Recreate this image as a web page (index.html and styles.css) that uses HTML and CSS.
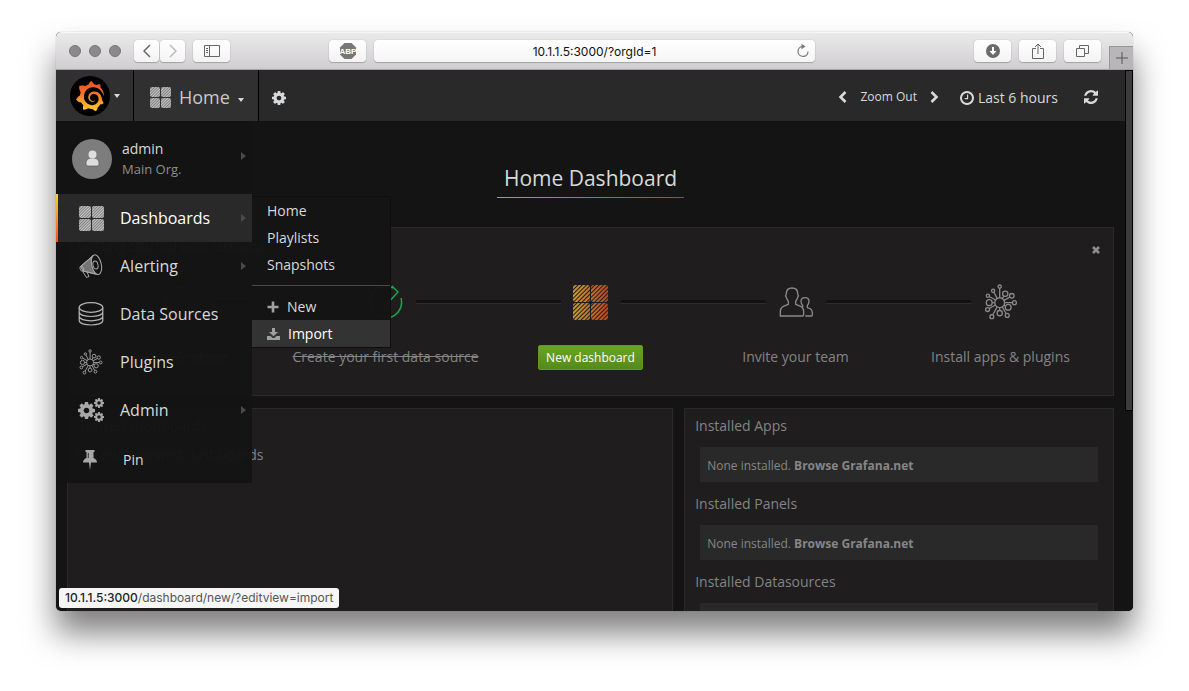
FILE: index.html
```html
<!DOCTYPE html>
<html lang="en">
<head>
<meta charset="utf-8">
<title>Grafana - Home</title>
<meta name="viewport" content="width=device-width, initial-scale=1">
<link rel="stylesheet" href="styles.css">
</head>
<body>
<svg class="sprite" aria-hidden="true">
  <defs>
    <linearGradient id="flame" x1="0" y1="1" x2="0" y2="0"><stop offset="0" stop-color="#fcd22c"/><stop offset=".15" stop-color="#fbb52d"/><stop offset=".65" stop-color="#f26a2a"/><stop offset="1" stop-color="#ef4e28"/></linearGradient>
    <linearGradient id="amber" gradientUnits="userSpaceOnUse" x1="0" y1="0" x2="36" y2="0"><stop offset="0" stop-color="#c59b2f"/><stop offset="1" stop-color="#bf4420"/></linearGradient>
    <pattern id="hatch" width="2" height="2" patternUnits="userSpaceOnUse" patternTransform="rotate(45)"><rect width="2" height="2" fill="#6a6a6a"/><rect width="1.200" height="2" fill="#c8c8c8"/></pattern>
    <pattern id="cuts" width="3" height="3" patternUnits="userSpaceOnUse" patternTransform="rotate(45)"><rect width="1" height="3" fill="#1f1d1e"/></pattern>
    <symbol id="tiles" viewBox="0 0 36 36"><rect width="17" height="17" rx="3"/><rect x="19" width="17" height="17" rx="3"/><rect y="19" width="17" height="17" rx="3"/><rect x="19" y="19" width="17" height="17" rx="3"/></symbol>
    <g id="tile-set"><rect width="17" height="17" rx="3"/><rect x="18" width="17" height="17" rx="3"/><rect y="18" width="17" height="17" rx="3"/><rect x="18" y="18" width="17" height="17" rx="3"/></g>
    <g id="tile-small"><rect width="10" height="10" rx="2"/><rect x="11" width="10" height="10" rx="2"/><rect y="11" width="10" height="10" rx="2"/><rect x="11" y="11" width="10" height="10" rx="2"/></g>
    <g id="tile-medium"><rect width="12" height="12" rx="2"/><rect x="13" width="12" height="12" rx="2"/><rect y="13" width="12" height="12" rx="2"/><rect x="13" y="13" width="12" height="12" rx="2"/></g>
    <symbol id="cog" viewBox="128 128 1536 1536"><path d="M1152 896q0-106-75-181t-181-75-181 75-75 181 75 181 181 75 181-75 75-181zm512-109v222q0 12-8 23t-20 13l-185 28q-19 54-39 91 35 50 107 138 10 12 10 25t-9 23q-27 37-99 108t-94 71q-12 0-26-9l-138-108q-44 23-91 38-16 136-29 186-7 28-36 28h-222q-14 0-24.500-8.500t-11.500-21.500l-28-184q-49-16-90-37l-141 107q-10 9-25 9-14 0-25-11-126-114-165-168-7-10-7-23 0-12 8-23 15-21 51-66.500t54-70.500q-27-50-41-99l-183-27q-13-2-21-12.500t-8-23.500v-222q0-12 8-23t19-13l186-28q14-46 39-92-40-57-107-138-10-12-10-24 0-10 9-23 26-36 98.500-107.500t94.500-71.500q13 0 26 10l138 107q44-23 91-38 16-136 29-186 7-28 36-28h222q14 0 24.500 8.500t11.500 21.500l28 184q49 16 90 37l142-107q9-9 24-9 13 0 25 10 129 119 165 170 7 8 7 22 0 12-8 23-15 21-51 66.500t-54 70.500q26 50 41 98l183 28q13 2 21 12.500t8 23.500z"/></symbol>
    <symbol id="hub" viewBox="368 190 102 110"><g fill="none" stroke="currentColor" stroke-width="4"><circle cx="415" cy="247" r="15"/><circle cx="415" cy="198" r="5"/><circle cx="395" cy="211" r="5"/><circle cx="432" cy="220" r="8"/><circle cx="379" cy="226" r="5"/><circle cx="452" cy="226" r="7"/><circle cx="383" cy="247" r="9"/><circle cx="460" cy="247" r="6"/><circle cx="378" cy="268" r="6"/><circle cx="441" cy="261" r="9"/><circle cx="391" cy="290" r="6"/><circle cx="415" cy="279" r="8"/><circle cx="438" cy="286" r="6"/><path d="M415 203v29M398 216l9 18M428 227l-5 7M384 229l19 10M446 230l-18 10M392 247h8M430 247h24M383 265l19-11M432 258l-4-3M394 284l13-24M415 262v9M435 281l-12-21"/></g></symbol>
  </defs>
</svg>

<div class="window">
  <header class="toolbar">
    <div class="lights"><span></span><span></span><span></span></div>
    <div class="history">
      <button class="key" aria-label="Back"><svg width="8" height="14" viewBox="0 0 8 14"><path d="M7 1 1 7l6 6" fill="none" stroke="#666" stroke-width="1.500"/></svg></button>
      <button class="key" aria-label="Forward"><svg width="8" height="14" viewBox="0 0 8 14"><path d="m1 1 6 6-6 6" fill="none" stroke="#bbb" stroke-width="1.500"/></svg></button>
    </div>
    <button class="key wide" aria-label="Show sidebar"><svg width="16" height="12" viewBox="0 0 16 12"><path d="M.5.5h15v11H.5zM5.500.5v11M2 3.500h2M2 5.500h2M2 7.500h2" fill="none" stroke="#666"/></svg></button>
    <button class="key wide adblock" aria-label="AdBlock"><svg width="18" height="18" viewBox="0 0 18 18"><path d="M5.500 1h7L17 5.500v7L12.500 17h-7L1 12.500v-7z" fill="#777"/><text x="9" y="12" text-anchor="middle" class="abp">ABP</text></svg></button>
    <div class="address">
      <input type="text" aria-label="Address" value="10.1.1.5:3000/?orgId=1">
      <button aria-label="Reload"><svg width="14" height="15" viewBox="0 0 14 15"><path d="M6.500 3.500A5 5 0 1 0 12 8.500" fill="none" stroke="#777" stroke-width="1.200"/><path d="m5.500.8 4 2.700-4 2.700z" fill="#777"/></svg></button>
    </div>
    <div class="actions">
      <button class="key wide" aria-label="Downloads"><svg width="14" height="14" viewBox="0 0 14 14"><circle cx="7" cy="7" r="7" fill="#6b6b6b"/><path d="M6 3h2v4h2.500L7 11 3.500 7H6z" fill="#fff"/></svg></button>
      <button class="key wide" aria-label="Share"><svg width="12" height="16" viewBox="0 0 12 16"><path d="M4 5.500H.5v10h11v-10H8M6 11V1M3 4l3-3 3 3" fill="none" stroke="#666"/></svg></button>
      <button class="key wide" aria-label="Show tabs"><svg width="13" height="12" viewBox="0 0 13 12"><path d="M.5 3.500h8v8h-8zM3.500 3V.5h9v8H9" fill="none" stroke="#666"/></svg></button>
    </div>
    <button class="new-tab" aria-label="New tab"><svg width="12" height="12" viewBox="0 0 12 12"><path d="M6 0v12M0 6h12" stroke="#555"/></svg></button>
  </header>

  <div class="page">
    <div class="view">
      <nav class="navbar">
        <button class="nav-block brand" aria-label="Grafana menu">
          <span class="logo"><svg width="30" height="30" viewBox="0 0 24 24"><path fill="url(#flame)" d="M23.020 10.590a8.578 8.578 0 0 0-.862-3.034 8.911 8.911 0 0 0-1.789-2.445c.337-1.342-.413-2.505-.413-2.505-1.292-.08-2.113.4-2.416.62-.052-.02-.102-.044-.154-.064-.22-.089-.446-.172-.677-.247-.231-.073-.47-.14-.711-.197a9.867 9.867 0 0 0-.875-.161C14.557.753 12.940 0 12.940 0c-1.804 1.145-2.147 2.744-2.147 2.744l-.018.093c-.098.029-.2.057-.298.088-.138.042-.275.094-.413.143-.138.055-.275.107-.41.166a8.869 8.869 0 0 0-1.557.87l-.063-.029c-2.497-.955-4.716.195-4.716.195-.203 2.658.996 4.330 1.235 4.636a11.608 11.608 0 0 0-.607 2.635C1.636 12.677.953 15.014.953 15.014c1.926 2.214 4.171 2.351 4.171 2.351.003-.002.006-.002.006-.005.285.509.615.994.986 1.446.156.19.32.371.488.548-.704 2.009.099 3.680.099 3.680 2.144.08 3.553-.937 3.849-1.173a9.784 9.784 0 0 0 3.164.501h.08l.055-.003.107-.002.103-.005.003.002c1.010 1.440 2.788 1.646 2.788 1.646 1.264-1.332 1.337-2.653 1.337-2.940v-.058c0-.02-.003-.039-.003-.06.265-.187.52-.387.758-.6a7.875 7.875 0 0 0 1.415-1.700c1.430.083 2.437-.885 2.437-.885-.236-1.490-1.085-2.216-1.264-2.354l-.018-.013-.016-.013a.217.217 0 0 1-.031-.02c.008-.092.016-.18.02-.27.011-.162.016-.323.016-.48v-.253l-.005-.098-.008-.135a1.891 1.891 0 0 0-.01-.13c-.003-.042-.008-.083-.013-.125l-.016-.124-.018-.122a6.215 6.215 0 0 0-2.032-3.730 6.015 6.015 0 0 0-3.222-1.460 6.292 6.292 0 0 0-.85-.048l-.107.002h-.063l-.044.003-.104.008a4.777 4.777 0 0 0-3.335 1.695c-.332.4-.592.84-.768 1.297a4.594 4.594 0 0 0-.312 1.817l.003.091c.005.055.007.11.013.164a3.615 3.615 0 0 0 .698 1.820 3.530 3.530 0 0 0 1.827 1.282c.33.098.66.14.971.137.039 0 .078 0 .114-.002l.063-.003c.02 0 .041-.003.062-.003.034-.002.065-.007.099-.01.007 0 .018-.003.028-.003l.031-.005.06-.008a1.180 1.180 0 0 0 .112-.02c.036-.008.072-.013.109-.024a2.634 2.634 0 0 0 .914-.415c.028-.02.056-.041.085-.065a.248.248 0 0 0 .039-.35.244.244 0 0 0-.309-.06l-.078.042c-.09.044-.184.083-.283.116a2.476 2.476 0 0 1-.475.096c-.028.003-.054.006-.083.006l-.083.002c-.026 0-.054 0-.08-.002l-.102-.006h-.012l-.024.006c-.016-.003-.031-.003-.044-.006-.031-.002-.06-.007-.091-.01a2.590 2.590 0 0 1-.724-.213 2.557 2.557 0 0 1-.667-.438 2.520 2.520 0 0 1-.805-1.475 2.306 2.306 0 0 1-.029-.444l.006-.122v-.023l.002-.031c.003-.021.003-.04.005-.06a3.163 3.163 0 0 1 1.352-2.290 3.120 3.120 0 0 1 .937-.43 2.946 2.946 0 0 1 .776-.101h.06l.07.002.045.003h.026l.07.005a4.041 4.041 0 0 1 1.635.49 3.940 3.940 0 0 1 1.602 1.662 3.770 3.770 0 0 1 .397 1.414l.005.076.003.075c.002.026.002.05.002.075 0 .024.003.052 0 .07v.065l-.002.073-.008.174a6.195 6.195 0 0 1-.08.639 5.100 5.100 0 0 1-.267.927 5.310 5.310 0 0 1-.624 1.130 5.052 5.052 0 0 1-3.237 2.014 4.820 4.820 0 0 1-.649.066l-.039.003h-.287a6.607 6.607 0 0 1-1.716-.265 6.776 6.776 0 0 1-3.400-2.274 6.750 6.750 0 0 1-.746-1.150 6.616 6.616 0 0 1-.714-2.596l-.005-.083-.002-.02v-.056l-.003-.073v-.096l-.003-.104v-.07l.003-.163c.008-.22.026-.45.054-.678a8.707 8.707 0 0 1 .28-1.355c.128-.444.286-.872.473-1.277a7.040 7.040 0 0 1 1.456-2.100 5.925 5.925 0 0 1 .953-.763c.169-.111.343-.213.524-.306.089-.05.182-.091.273-.135.047-.02.093-.042.138-.062a7.177 7.177 0 0 1 .714-.267l.145-.045c.049-.015.098-.026.148-.041.098-.029.197-.052.296-.076.049-.013.1-.02.15-.033l.15-.032.151-.028.076-.013.075-.01.153-.024c.057-.01.114-.013.171-.023l.169-.021c.036-.003.073-.008.106-.01l.073-.008.036-.003.042-.002c.057-.003.114-.008.171-.01l.086-.006h.023l.037-.003.145-.007a7.999 7.999 0 0 1 1.708.125 7.917 7.917 0 0 1 2.048.68 8.253 8.253 0 0 1 1.672 1.090l.09.077.089.078c.06.052.114.107.171.159.057.052.112.106.166.16.052.055.107.107.159.164a8.671 8.671 0 0 1 1.410 1.978c.012.026.028.052.04.078l.04.078.075.156c.023.051.05.1.07.153l.065.15a8.848 8.848 0 0 1 .45 1.340.19.19 0 0 0 .201.142.186.186 0 0 0 .172-.184c.01-.246.002-.532-.024-.856z"/></svg></span>
          <span class="caret"></span>
        </button>
        <button class="nav-block picker">
          <svg width="21" height="21" fill="url(#hatch)"><use href="#tile-small"/></svg>
          <span>Home</span>
          <span class="caret"></span>
        </button>
        <button class="nav-icon settings" aria-label="Settings"><svg width="14" height="14" fill="currentColor"><use href="#cog"/></svg></button>
        <div class="time">
          <button class="nav-icon" aria-label="Shift time back"><svg width="9" height="12" viewBox="0 0 9 12"><path d="M7.500 1 2.500 6l5 5" fill="none" stroke="currentColor" stroke-width="2.600"/></svg></button>
          <button class="nav-icon zoom">Zoom Out</button>
          <button class="nav-icon" aria-label="Shift time forward"><svg width="9" height="12" viewBox="0 0 9 12"><path d="m1.500 1 5 5-5 5" fill="none" stroke="currentColor" stroke-width="2.600"/></svg></button>
          <button class="nav-icon range"><svg width="14" height="14" viewBox="128 128 1536 1536" fill="currentColor"><path d="M1024 544v448q0 14-9 23t-23 9h-320q-14 0-23-9t-9-23v-64q0-14 9-23t23-9h224v-352q0-14 9-23t23-9h64q14 0 23 9t9 23zm416 352q0-148-73-273t-198-198-273-73-273 73-198 198-73 273 73 273 198 198 273 73 273-73 198-198 73-273zm224 0q0 209-103 385.500t-279.500 279.500-385.500 103-385.500-103-279.500-279.500-103-385.500 103-385.500 279.500-279.500 385.500-103 385.500 103 279.500 279.500 103 385.500z"/></svg>Last 6 hours</button>
          <button class="nav-icon" aria-label="Refresh"><svg width="14" height="14" viewBox="128 128 1536 1536" fill="currentColor"><path d="M1639 1056q0 5-1 7-64 268-268 434.500t-478 166.500q-146 0-282.500-55t-243.500-157l-129 129q-19 19-45 19t-45-19-19-45v-448q0-26 19-45t45-19h448q26 0 45 19t19 45-19 45l-137 137q71 66 161 102t187 36q134 0 250-65t186-179q11-17 53-117 8-23 30-23h192q13 0 22.500 9.500t9.500 22.500zm25-800v448q0 26-19 45t-45 19h-448q-26 0-45-19t-19-45 19-45l138-138q-148-137-349-137-134 0-250 65t-186 179q-11 17-53 117-8 23-30 23h-199q-13 0-22.500-9.500t-9.500-22.500v-7q65-268 270-434.500t480-166.500q146 0 284 55.500t245 156.500l130-129q19-19 45-19t45 19 19 45z"/></svg></button>
        </div>
      </nav>

      <main class="dashboard">
        <h1><span>Home Dashboard</span></h1>
        <section class="panel start">
          <div class="start-head">
            <h2>Getting Started with Grafana</h2>
            <button aria-label="Close"><svg width="8" height="8" viewBox="0 0 8 8"><path d="m1 1 6 6M7 1 1 7" stroke="currentColor" stroke-width="2.600"/></svg></button>
          </div>
          <ol class="steps">
            <li class="done"><span class="step-icon"><svg width="36" height="36" viewBox="0 0 36 36" fill="none" stroke="#1aa34a"><path d="M30 9A15 15 0 1 0 33 18M12 17l5 5L31 7"/></svg></span><a href="#">Install Grafana</a></li>
            <li class="done"><span class="step-icon"><svg width="36" height="36" viewBox="0 0 36 36" fill="none" stroke="#1aa34a" stroke-width="1.500"><path d="M25 4A16 16 0 1 0 33 14M11 15l6 7L30 8 24 2"/></svg></span><a href="#">Create your first data source</a></li>
            <li><span class="step-icon"><svg width="35" height="35"><use href="#tile-set" fill="url(#amber)"/><use href="#tile-set" fill="url(#cuts)"/></svg></span><a class="primary" href="#">New dashboard</a></li>
            <li><span class="step-icon"><svg width="34" height="30" viewBox="862 436 102 90" fill="none" stroke="#8a8a8a" stroke-width="4"><path d="M866 523h66q4 0 4-4v-10c0-13-10-16-24-21v-9c4-4 5-8 6-12q4-5 0-11c0-12-6-17-17-17s-17 5-17 17q-4 6 0 11c1 4 2 8 6 12v9c-14 5-24 8-24 21v14zM941 523h18q3 0 3-4v-5c0-11-6-13-15-16v-6c4-5 5-8 5-13 0-8-5-11-12-11s-12 3-12 11c0 5 1 8 5 13v5"/></svg></span><a href="#">Invite your team</a></li>
            <li><span class="step-icon"><svg width="34" height="36"><use href="#hub"/></svg></span><a href="#">Install apps &amp; plugins</a></li>
          </ol>
        </section>
        <div class="columns">
          <section class="panel recent"><h2>Starred dashboards</h2><h2>Recently viewed dashboards</h2></section>
          <section class="panel installed">
            <h2>Installed Apps</h2><p>None installed. <a href="#">Browse Grafana.net</a></p>
            <h2>Installed Panels</h2><p>None installed. <a href="#">Browse Grafana.net</a></p>
            <h2>Installed Datasources</h2><p></p>
          </section>
        </div>
      </main>

      <aside class="sidemenu">
        <a class="profile" href="#">
          <span class="avatar"><svg width="15" height="17" viewBox="0 0 15 17"><path d="M1 14c0-4 2-6 6.500-6s6.500 2 6.500 6q0 2-2 2H3q-2 0-2-2z" fill="#dcdddd" stroke="#555" stroke-width=".6"/><circle cx="7.500" cy="4.500" r="4" fill="#dcdddd"/></svg></span>
          <span class="who"><b>admin</b><small>Main Org.</small></span>
          <i class="arrow"></i>
        </a>
        <ul class="menu">
          <li class="active">
            <a href="#"><span class="glyph"><svg width="25" height="25" fill="url(#hatch)"><use href="#tile-medium"/></svg></span>Dashboards<i class="arrow"></i></a>
            <ul class="submenu">
              <li><a href="#">Home</a></li>
              <li><a href="#">Playlists</a></li>
              <li><a href="#">Snapshots</a></li>
              <li class="rule"><a href="#"><svg width="12" height="12" viewBox="0 0 12 12"><path d="M6 .5v11M.5 6h11" stroke="#a0a0a0" stroke-width="2.600"/></svg>New</a></li>
              <li><a class="hover" href="#"><svg width="13" height="12" viewBox="0 0 13 12" fill="#a0a0a0"><path d="M5 0h3v4h3L6.500 8.200 2 4h3z"/><path d="M0 8h3.500l2 2h2l2-2H13v4H0z"/></svg>Import</a></li>
            </ul>
          </li>
          <li><a href="#"><span class="glyph"><svg width="24" height="24" viewBox="0 0 24 24" fill="none" stroke="#a8a8a8"><path d="M1.500 12.500 14 2M4 17l14 3.500"/><path d="M1.500 12.500 14 1.500Q9 9 17.500 20L4 17z" fill="#a8a8a8" fill-opacity=".65"/><ellipse cx="17.500" cy="10.700" rx="4.800" ry="10" transform="rotate(-12 17.500 10.700)" fill="#141414"/><ellipse cx="16.500" cy="11" rx="2.500" ry="4" transform="rotate(-12 16.500 11)"/><ellipse cx="2.800" cy="14.700" rx="1.600" ry="2.500" transform="rotate(-25 2.800 14.700)"/><path d="m4 18 3.500 5.500 2.500-1-2-4.500"/></svg></span>Alerting<i class="arrow"></i></a></li>
          <li><a href="#"><span class="glyph"><svg width="26" height="24" viewBox="0 0 26 24" fill="none" stroke="#b4b4b4" stroke-width="1.200"><ellipse cx="13" cy="5.500" rx="11.800" ry="4.800"/><path d="M1.200 5.500v13c0 6 23.600 6 23.600 0v-13M1.200 10c0 6 23.600 6 23.600 0M1.200 14.300c0 6 23.600 6 23.600 0"/></svg></span>Data Sources</a></li>
          <li><a href="#"><span class="glyph"><svg width="24" height="26"><use href="#hub"/></svg></span>Plugins</a></li>
          <li><a href="#"><span class="glyph"><svg width="28" height="24" viewBox="0 0 28 24" fill="#a8a8a8"><use href="#cog" x="1" y="4" width="17" height="17"/><use href="#cog" x="17" y="0" width="10" height="10"/><use href="#cog" x="17" y="14" width="10" height="10"/></svg></span>Admin<i class="arrow"></i></a></li>
          <li class="pin"><a href="#"><span class="glyph"><svg width="14" height="20" viewBox="0 0 14 20" fill="#a8a8a8"><path d="M2.500 0h9v2h-1v6c2.300 1 3.500 2.500 3.500 4.500H8L7 20l-1-7.500H0C0 10.500 1.200 9 3.500 8V2h-1z"/><path d="M5.300 3v5" stroke="#333"/></svg></span>Pin</a></li>
        </ul>
      </aside>
    </div>
    <div class="scrollbar"><span></span></div>
    <div class="status"><b>10.1.1.5:3000</b>/dashboard/new/?editview=import</div>
  </div>
</div>
</body>
</html>
```

FILE: styles.css
```css
* { box-sizing: border-box; }
html, body { height: 100%; }
body {
  margin: 0;
  padding: 32px 56px 80px;
  background: #fff;
  font-family: "Open Sans", sans-serif;
  font-size: 14px;
  color: #d8d9da;
  overflow: hidden;
}
button { margin: 0; padding: 0; border: 0; background: none; color: inherit; font: inherit; }
a { color: inherit; text-decoration: none; }
ul, ol { margin: 0; padding: 0; list-style: none; }
svg { display: block; flex: none; }
.sprite { position: absolute; width: 0; height: 0; }

.window {
  display: flex;
  flex-direction: column;
  height: 100%;
  border-radius: 5px;
  overflow: hidden;
  background: #141414;
  box-shadow: 0 22px 32px rgba(0, 0, 0, .5), 0 0 1px rgba(0, 0, 0, .4);
}

/* browser toolbar */
.toolbar {
  display: flex;
  align-items: center;
  flex: none;
  height: 38px;
  padding-left: 13px;
  background: linear-gradient(#ebeaeb, #d0ced0);
  border-top: 1px solid #f5f5f5;
  border-bottom: 1px solid #a5a3a5;
}
.lights { display: flex; gap: 8px; margin-right: 13px; }
.lights span { width: 12px; height: 12px; border-radius: 50%; background: #8b898c; border: 1px solid #77757a; }
.history { display: flex; gap: 1px; margin-right: 8px; }
.key {
  display: flex;
  align-items: center;
  justify-content: center;
  width: 25px;
  height: 22px;
  border-radius: 4px;
  background: linear-gradient(#fff, #f3f3f3);
  box-shadow: 0 0 1px rgba(0, 0, 0, .35), 0 1px 1px rgba(0, 0, 0, .2);
}
.key.wide { width: 37px; }
.adblock { margin-left: 99px; margin-right: 8px; }
.abp { font: 700 8px "Liberation Sans", sans-serif; fill: #fff; }
.address {
  position: relative;
  flex: 1;
  height: 22px;
  border-radius: 4px;
  background: linear-gradient(#fff, #f5f5f5);
  box-shadow: 0 0 1px rgba(0, 0, 0, .35), 0 1px 1px rgba(0, 0, 0, .2);
}
.address input {
  width: 100%;
  height: 100%;
  padding: 0;
  border: 0;
  background: none;
  text-align: center;
  font: 12px Inter, sans-serif;
  color: #111;
}
.address button { position: absolute; right: 5px; top: 3px; }
.actions { display: flex; gap: 8px; margin: 0 8px 0 159px; }
.new-tab {
  display: flex;
  align-items: center;
  justify-content: center;
  align-self: flex-end;
  width: 24px;
  height: 23px;
  background: #b8b6b8;
  border-left: 1px solid #979597;
  border-top: 1px solid #979597;
}

/* page */
.page { position: relative; display: flex; flex: 1; min-height: 0; }
.view { position: relative; flex: 1; min-width: 0; overflow: hidden; }
.scrollbar { width: 8px; background: #141414; }
.scrollbar span { display: block; height: 63%; background: #3c3c3c; border: 1px solid #000; }
.status {
  position: absolute;
  left: 3px;
  bottom: 3px;
  padding: 0 6px;
  border-radius: 3px;
  background: #f6f6f6;
  color: #555;
  font: 12px/20px Inter, sans-serif;
}
.status b { font-weight: 500; color: #222; }

.navbar { display: flex; height: 51px; background: #292929; }
.nav-block { display: flex; align-items: center; background: #303030; border-right: 1px solid #000; }
.brand { width: 78px; padding: 1px 0 0 14px; gap: 4px; }
.logo { display: flex; align-items: center; justify-content: center; width: 40px; height: 40px; border-radius: 50%; background: #000; }
.caret { border: 3px solid transparent; border-top: 4px solid #d8d9da; border-bottom: 0; }
.picker { padding: 3px 14px 0 16px; gap: 8px; font-size: 18px; color: #c8c8c8; }
.picker .caret { margin-top: 5px; }
.nav-icon { display: flex; align-items: center; color: #d8d9da; }
.settings { margin-left: 13px; padding-top: 4px; }
.time { display: flex; gap: 13px; margin-left: auto; padding: 2px 27px 0 0; }
.zoom { font-size: 12px; }
.range { gap: 4px; margin: 2px 13px 0 8px; }

.dashboard { padding: 0 11px; }
.dashboard h1 { margin: 0; padding: 38px 0 29px; text-align: center; font-size: 21px; font-weight: 400; line-height: 38px; }
.dashboard h1 span { display: inline-block; padding: 0 7px; border-bottom: 1px solid; border-image: linear-gradient(90deg, #c59b2f, #bf3b1e) 1; }
.panel { background: #1f1d1e; border: 1px solid #2a2a2a; color: #848484; }
.panel h2 { margin: 0; font-size: 14px; font-weight: 400; line-height: 20px; }
.start { height: 169px; padding: 8px 10px 0; }
.start-head { display: flex; justify-content: space-between; color: #8e8e8e; }
.start-head button { padding: 10px 3px 2px; }
.steps { display: grid; grid-template-columns: repeat(5, 1fr); margin-top: 22px; }
.steps li { display: flex; flex-direction: column; align-items: center; gap: 19px; line-height: 24px; white-space: nowrap; }
.step-icon { display: grid; grid-template-columns: 1fr 60px 1fr; align-items: center; justify-items: center; width: 100%; height: 48px; color: #8a8a8a; }
.step-icon::before, .step-icon::after { content: ""; width: 100%; height: 3px; background: #121212; border-bottom: 1px solid #2e2e2e; }
.steps li:first-child .step-icon::before, .steps li:last-child .step-icon::after { visibility: hidden; }
.done a { text-decoration: line-through; }
.primary { padding: 0 7px; border-radius: 2px; background: linear-gradient(#6ba326, #558a1c); border: 1px solid #639b20; color: #fff; font-size: 12px; line-height: 23px; font-weight: 500; }
.columns { display: grid; grid-template-columns: repeat(12, 1fr); gap: 11px; margin-top: 12px; min-height: 400px; }
.recent { grid-column: span 7; padding: 7px 10px; }
.recent h2 + h2 { margin-top: 9px; }
.installed { grid-column: span 5; padding: 7px 15px 0 10px; }
.installed p { height: 35px; margin: 11px 0 12px 5px; padding: 1px 7px 0; background: #292929; font-size: 12px; line-height: 35px; color: #868686; }
.installed p a { font-weight: 700; }

/* side menu */
.sidemenu { position: absolute; top: 51px; left: 0; width: 196px; background: rgba(20, 20, 20, .97); }
.profile { display: flex; align-items: center; height: 73px; padding: 2px 6px 0 16px; }
.avatar { display: flex; align-items: center; justify-content: center; width: 40px; height: 40px; border-radius: 50%; background: #7d7d7d; }
.who { display: flex; flex-direction: column; flex: 1; margin-left: 10px; line-height: 20px; }
.who b { font-weight: 400; }
.who small { font-size: 13px; color: #8e8e8e; }
.arrow { margin-left: auto; border: 4px solid transparent; border-left: 5px solid #4a4a4a; border-right: 0; }
.profile .arrow { margin-bottom: 6px; }
.menu > li { position: relative; }
.menu > li > a { display: flex; align-items: center; height: 48px; padding-right: 6px; font-size: 16px; }
.glyph { display: flex; justify-content: center; width: 64px; padding-left: 6px; color: #a0a0a0; }
.menu > .active > a { background: #292929; color: #fff; }
.menu > .active::before { content: ""; position: absolute; top: 0; bottom: 0; left: 0; width: 2px; background: linear-gradient(#ffd12c, #f04e24); }
.menu > .pin > a { height: 49px; padding-top: 2px; font-size: 14px; }
.pin .glyph { width: 67px; padding: 0; }
.submenu { position: absolute; z-index: 1; top: 2px; left: 100%; width: 139px; background: rgba(20, 20, 20, .98); border: 1px solid #0e0e0e; border-left: 0; }
.submenu a { display: flex; align-items: center; gap: 8px; height: 27px; padding-left: 15px; }
.submenu .hover { background: #333; color: #fff; }
.submenu .rule { margin-top: 7px; padding-top: 7px; border-top: 1px solid #4a4a4a; }
```
